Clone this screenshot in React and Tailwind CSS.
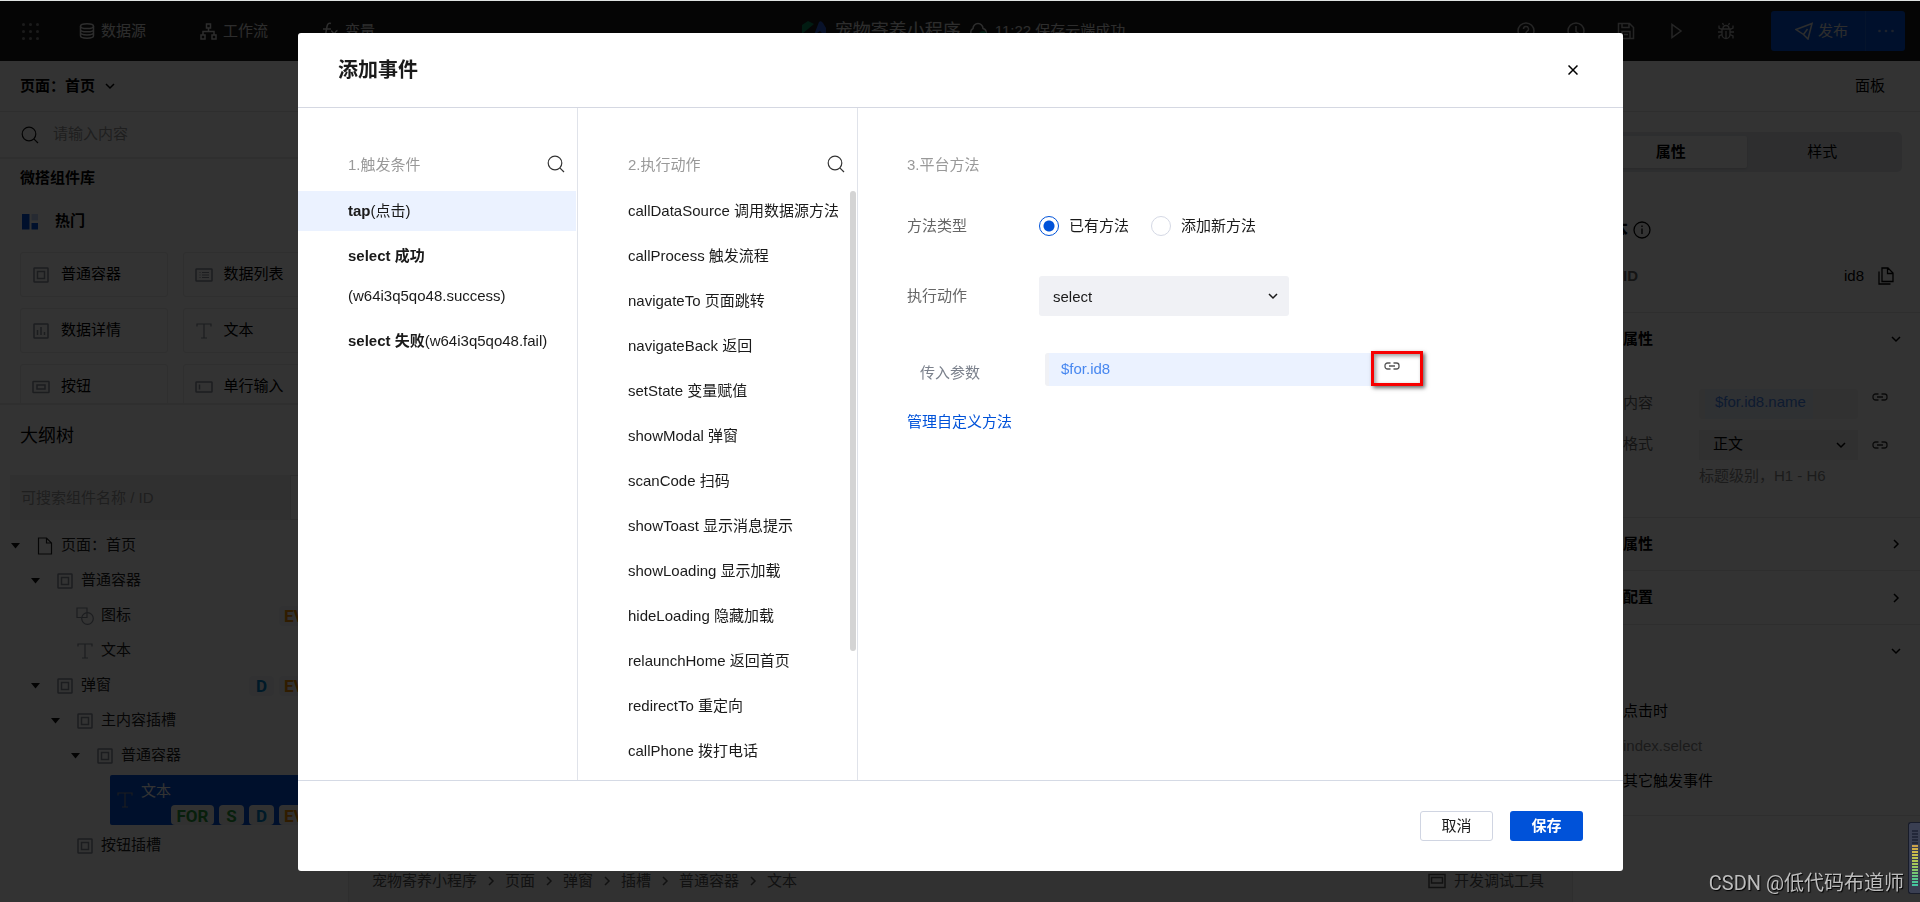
import React from "react";

const FONT = "font-['Liberation_Sans','Noto_Sans_CJK_SC',sans-serif]";

/* ---------- icons ---------- */

function Svg({ w = 18, h = 18, sw = 1.5, className = "", children }) {
  return (
    <svg
      aria-hidden="true"
      width={w}
      height={h}
      viewBox={`0 0 ${w} ${h}`}
      fill="none"
      stroke="currentColor"
      strokeWidth={sw}
      className={`shrink-0 ${className}`}
    >
      {children}
    </svg>
  );
}

const SearchIcon = ({ className }) => (
  <Svg className={className} sw={1.2}>
    <circle cx="8" cy="8" r="6.8" />
    <path d="M12.8 12.8 17 17" />
  </Svg>
);

const ChevronDown = ({ className }) => (
  <Svg w={10} h={10} className={className}>
    <path d="M1 3l4 4 4-4" />
  </Svg>
);

const ChevronRight = ({ className }) => (
  <Svg w={10} h={10} className={className}>
    <path d="M3 1l4 4-4 4" />
  </Svg>
);

const LinkIcon = ({ className }) => (
  <Svg w={16} h={10} sw={1.3} className={className}>
    <path d="M6.500 2H3.500a2.500 2.500 0 0 0-2.500 2.500v1A2.500 2.500 0 0 0 3.500 8h3M9.500 2h3a2.500 2.500 0 0 1 2.500 2.500v1a2.500 2.500 0 0 1-2.500 2.500h-3M5 5h6" />
  </Svg>
);

const ContainerIcon = () => (
  <Svg>
    <rect x="2" y="2" width="14" height="14" rx="0.5" />
    <rect x="5.500" y="5.500" width="7" height="7" />
  </Svg>
);

const ListIcon = () => (
  <Svg>
    <rect x="1" y="3" width="16" height="12" rx="0.5" />
    <path d="M4.500 6.500h1M7 6.500h7M4.500 9h1M7 9h7M4.500 11.500h1M7 11.500h7" strokeWidth="1" />
  </Svg>
);

const DetailIcon = () => (
  <Svg>
    <rect x="2" y="2" width="14" height="14" rx="0.5" />
    <path d="M5.500 8v5M9 5v8M12.500 10v3" />
  </Svg>
);

const TextIcon = () => (
  <Svg sw={1.2}>
    <path d="M2 4.500V2h14v2.500M9 2v14M6 16h6" />
  </Svg>
);

const ButtonIcon = () => (
  <Svg>
    <rect x="1" y="3.500" width="16" height="11" rx="0.5" />
    <rect x="5" y="7" width="8" height="4" />
  </Svg>
);

const InputIcon = () => (
  <Svg>
    <rect x="1" y="4" width="16" height="10" rx="0.5" />
    <path d="M4.500 6.500v5" />
  </Svg>
);

const FileIcon = () => (
  <Svg sw={1.2} className="text-[#222]">
    <path d="M2.500 1h8l5 5v11h-13zM10.500 1v5h5" />
  </Svg>
);

const ShapesIcon = () => (
  <Svg sw={1.2}>
    <path d="M5.500 10.500H1V1h10v4.500" />
    <path d="M5.500 10.500h5.500V5.500" />
    <circle cx="11.500" cy="11.500" r="5.800" />
  </Svg>
);

const TREE_ICONS = {
  file: FileIcon,
  box: ContainerIcon,
  shapes: ShapesIcon,
  text: TextIcon,
};

/* ---------- header ---------- */

function TopBar() {
  return (
    <header className="flex h-[60px] shrink-0 items-center bg-[#1a1a1a] text-[15px] text-[#e0e0e0]">
      <div className="flex flex-1 items-center pl-[22px]">
        <button aria-label="菜单" className="mr-[40px] text-[#888]">
          <svg width="17" height="17" viewBox="0 0 17 17" fill="currentColor" aria-hidden="true">
            {[1.5, 8.5, 15.5].map((y) =>
              [1.5, 8.5, 15.5].map((x) => <circle key={`${x}-${y}`} cx={x} cy={y} r="1.5" />)
            )}
          </svg>
        </button>
        <a href="#data" className="mr-[54px] flex items-center gap-[6px]">
          <Svg w={16} h={16}>
            <ellipse cx="8" cy="3.200" rx="6.500" ry="2.400" />
            <path d="M1.500 3.200v9.600c0 1.300 2.900 2.400 6.500 2.400s6.500-1.100 6.500-2.400V3.200M1.500 6.400c0 1.300 2.900 2.400 6.500 2.400s6.500-1.100 6.500-2.400M1.500 9.600c0 1.300 2.900 2.400 6.500 2.400s6.500-1.100 6.500-2.400" />
          </Svg>
          数据源
        </a>
        <a href="#flow" className="mr-[54px] flex items-center gap-[6px]">
          <Svg w={17} h={17}>
            <path d="M6.500 1h4v4h-4zM1 12h4v4H1zM12 12h4v4h-4zM8.500 5v3.500M3 12V8.500h11V12" />
          </Svg>
          工作流
        </a>
        <a href="#var" className="flex items-center gap-[6px]">
          <Svg w={17} h={18}>
            <path d="M9 1.500c-2.500-1-3.500.5-4 3L3.500 13c-.5 2.500-1 3.500-2.500 3.500M1 7h8M9 9c3 0 3 7 6 7M15.500 8.500c-2.500 0-4 7-6.500 7" />
          </Svg>
          变量
        </a>
      </div>

      <div className="flex items-center">
        <svg width="24" height="20" viewBox="0 0 24 20" aria-hidden="true" className="mr-[9px]">
          <path d="M0 4 6 0l6 3-6 5-6 5z" fill="#078a5b" />
          <path d="M12 14 17 1q2-2 4 1l3 5v9l-6-6z" fill="#2a5bd0" />
        </svg>
        <span className="text-[18px]">宠物寄养小程序</span>
        <Svg w={18} h={18} className="mx-[8px]">
          <path d="M5 14a4 4 0 0 1-1-7.500 5 5 0 0 1 10 0 4 4 0 0 1 1 7.500z" />
          <circle cx="14" cy="13" r="4" fill="#078a5b" stroke="none" />
        </Svg>
        <span>11:22 保存云端成功</span>
      </div>

      <div className="flex flex-1 items-center justify-end pr-[15px]">
        <div className="mr-[36px] flex gap-[32px] text-[#bbb]">
          <button aria-label="帮助">
            <Svg>
              <circle cx="9" cy="9" r="8" />
              <path d="M6.500 7a2.500 2.500 0 1 1 3.500 2.300q-1 .5-1 1.700M9 12.500v1.500" />
            </Svg>
          </button>
          <button aria-label="历史">
            <Svg>
              <circle cx="9" cy="9" r="8" />
              <path d="M9 4v5.500l3 2" />
            </Svg>
          </button>
          <button aria-label="保存页面">
            <Svg>
              <path d="M1.500 1.500h11l4 4v11h-15zM5 1.500v4h7v-4M5 16.500v-7h8v7M7 12.500h4" />
            </Svg>
          </button>
          <button aria-label="预览">
            <Svg>
              <path d="M5 2.500v13l9-6.500z" />
            </Svg>
          </button>
          <button aria-label="调试">
            <Svg sw={1.3}>
              <path d="M5 7h8v5.500a4 4 0 0 1-8 0zM6 6.500a3 3 0 0 1 6 0M9 9v7M1 10h4M13 10h4M2 3.500V6l3 1.500M16 3.500V6l-3 1.500M2 16.500V14l3-1.500M16 16.500V14l-3-1.500M5.500 1l1 2M12.500 1l-1 2" />
            </Svg>
          </button>
        </div>
        <div className="flex h-[40px] rounded-[3px] bg-[#0052d9]">
          <button className="flex w-[94px] items-center justify-end gap-[5px] pr-[17px]">
            <Svg>
              <path d="M1 7.500 17 1.500 13 17 8.500 12.500zM8.500 12.500 12.500 7" />
            </Svg>
            发布
          </button>
          <button
            aria-label="更多"
            className="flex w-[40px] items-center justify-center border-l border-[#1a63dd] text-[#8fa9dd]"
          >
            <svg width="16" height="4" viewBox="0 0 16 4" fill="currentColor" aria-hidden="true">
              <circle cx="1.500" cy="2" r="1.300" />
              <circle cx="8" cy="2" r="1.300" />
              <circle cx="14.500" cy="2" r="1.300" />
            </svg>
          </button>
        </div>
      </div>
    </header>
  );
}

/* ---------- left panel ---------- */

const COMPONENTS = [
  ["普通容器", ContainerIcon],
  ["数据列表", ListIcon],
  ["数据详情", DetailIcon],
  ["文本", TextIcon],
  ["按钮", ButtonIcon],
  ["单行输入", InputIcon],
];

const INDENT = ["pl-[10px]", "pl-[30px]", "pl-[50px]", "pl-[70px]"];

const TREE = [
  { level: 0, open: true, icon: "file", label: "页面：首页", badges: [] },
  { level: 1, open: true, icon: "box", label: "普通容器", badges: [] },
  { level: 2, icon: "shapes", label: "图标", badges: ["EV"] },
  { level: 2, icon: "text", label: "文本", badges: [] },
  { level: 1, open: true, icon: "box", label: "弹窗", badges: ["D", "EV"] },
  { level: 2, open: true, icon: "box", label: "主内容插槽", badges: [] },
  { level: 3, open: true, icon: "box", label: "普通容器", badges: [] },
];

const BADGE_COLORS = {
  FOR: "w-[43px] justify-center text-[#2b9c3c]",
  S: "w-[25px] justify-center text-[#2b9c3c]",
  D: "w-[25px] justify-center text-[#0080c8]",
  EV: "w-[33px] pl-[5px] text-[#f08a00]",
};

function Badges({ items, solid }) {
  return (
    <span className="flex gap-[5px]">
      {items.map((b) => (
        <span
          key={b}
          className={`flex h-[20px] items-center rounded-[4px] pt-[2px] font-['Roboto',sans-serif] text-[17px] leading-none font-bold ${
            solid ? "bg-[#f3f6f4]" : "bg-[#f3f5f8]"
          } ${BADGE_COLORS[b]}`}
        >
          {b}
        </span>
      ))}
    </span>
  );
}

function TreeRow({ level, open, icon, label, badges }) {
  const Icon = TREE_ICONS[icon];
  return (
    <li className={`flex h-[35px] items-center pr-[36px] text-[#222] ${INDENT[level]}`}>
      <span className="flex w-[10px] justify-center">
        {open && (
          <svg width="9" height="6" viewBox="0 0 9 6" fill="#111" aria-hidden="true">
            <path d="M0 0h9L4.500 5.500z" />
          </svg>
        )}
      </span>
      <span className="ml-[16px] text-[#8a8f9c]">
        <Icon />
      </span>
      <span className="ml-[7px] flex-1">{label}</span>
      <Badges items={badges} />
    </li>
  );
}

function LeftPanel() {
  return (
    <aside className="flex w-[349px] shrink-0 flex-col border-r border-[#e5e5e5] bg-white text-[15px] text-black">
      <button className="flex h-[51px] shrink-0 items-center gap-[10px] border-b border-[#e5e5e5] pl-[20px] font-bold">
        页面：首页
        <ChevronDown />
      </button>
      <label className="flex h-[47px] shrink-0 items-center gap-[14px] border-b-2 border-[#ebebeb] pl-[21px]">
        <SearchIcon className="text-[#111]" />
        <input
          aria-label="搜索组件"
          placeholder="请输入内容"
          className="w-[240px] bg-transparent outline-none placeholder:text-[#999]"
        />
      </label>
      <div className="h-[246px] shrink-0 overflow-hidden border-b-2 border-[#e8e8e8]">
        <h2 className="h-[38px] pl-[20px] leading-[38px] font-bold">微搭组件库</h2>
        <h3 className="flex h-[48px] items-center gap-[16px] pl-[22px] font-bold">
          <svg width="17" height="17" viewBox="0 0 17 17" aria-hidden="true">
            <path d="M0 1h7.500v15.500H0z" fill="#0052d9" />
            <path d="M9.500 1H16v6.500H9.500z" fill="#bcd0f7" />
            <path d="M9.500 10H16v6.500H9.500z" fill="#0052d9" />
          </svg>
          热门
        </h3>
        <div className="mt-[7px] grid grid-cols-2 gap-x-[15px] gap-y-[11px] pr-[18px] pl-[20px]">
          {COMPONENTS.map(([name, Icon]) => (
            <button
              key={name}
              className="flex h-[45px] items-center gap-[11px] rounded-[3px] border border-[#e8e8e8] pl-[11px]"
            >
              <span className="text-[#8a8f9c]">
                <Icon />
              </span>
              {name}
            </button>
          ))}
        </div>
      </div>
      <h2 className="mt-[13px] h-[36px] shrink-0 pl-[20px] text-[18px] leading-[36px]">大纲树</h2>
      <div className="mt-[21px] flex h-[45px] shrink-0 pl-[10px]">
        <input
          aria-label="搜索大纲树"
          placeholder="可搜索组件名称 / ID"
          className="w-[280px] bg-[#f0f0f0] pt-[2px] pl-[11px] outline-none placeholder:text-[#999]"
        />
        <button aria-label="展开" className="w-[40px] border border-[#e0e0e0]" />
      </div>
      <ul className="mt-[8px]">
        {TREE.map((row, i) => (
          <TreeRow key={i} {...row} />
        ))}
        <li className="mt-[2px] ml-[110px] flex h-[50px] items-center rounded-l-[2px] bg-[#0052d9] pl-[6px]">
          <span className="text-[#8a8f9c]">
            <TextIcon />
          </span>
          <div className="ml-[7px] flex flex-1 flex-col pr-[36px]">
            <span className="h-[30px] leading-[32px] text-white">文本</span>
            <span className="flex justify-end">
              <Badges items={["FOR", "S", "D", "EV"]} solid />
            </span>
          </div>
        </li>
        <li className="mt-[3px]">
          <ul>
            <TreeRow level={2} icon="box" label="按钮插槽" badges={[]} />
          </ul>
        </li>
      </ul>
    </aside>
  );
}

/* ---------- canvas footer ---------- */

const CRUMBS = ["宠物寄养小程序", "页面", "弹窗", "插槽", "普通容器", "文本"];

function Canvas() {
  return (
    <main className="flex min-w-0 flex-1 flex-col bg-[#f5f5f5]">
      <div className="flex-1" />
      <footer className="flex h-[42px] items-center justify-between pr-[28px] pl-[23px] text-[15px] text-[#555]">
        <nav className="flex items-center">
          {CRUMBS.map((c, i) => (
            <span key={c} className="flex items-center">
              {i > 0 && <ChevronRight className="mx-[9px]" />}
              <a href="#node">{c}</a>
            </span>
          ))}
        </nav>
        <button className="flex items-center gap-[8px]">
          <Svg>
            <rect x="1" y="2.500" width="16" height="13" />
            <rect x="3.500" y="5.500" width="11" height="5.500" />
          </Svg>
          开发调试工具
        </button>
      </footer>
    </main>
  );
}

/* ---------- right panel ---------- */

function Section({ title, open, className = "" }) {
  const Icon = open ? ChevronDown : ChevronRight;
  return (
    <button className={`flex w-full items-center justify-between pr-[19px] pl-[50px] font-bold ${className}`}>
      <span>{title}</span>
      <Icon />
    </button>
  );
}

function RightPanel() {
  return (
    <aside className="w-[348px] shrink-0 border-l border-[#e5e5e5] bg-white text-[15px] text-black">
      <div className="flex h-[51px] items-center justify-end border-b border-[#e5e5e5] pr-[35px]">
        <a href="#panel">面板</a>
      </div>
      <div className="mt-[20px] mr-[18px] ml-[18px] flex h-[40px] rounded-[5px] bg-[#e3e6eb] p-[4px]">
        <button className="flex-1 rounded-[2px] bg-white font-bold shadow">属性</button>
        <button className="flex-1">样式</button>
      </div>
      <div className="mt-[40px] flex h-[36px] items-center gap-[5px] pl-[19px]">
        <h2 className="text-[18px] font-bold">文本</h2>
        <Svg sw={1.3}>
          <circle cx="9" cy="9" r="8" />
          <path d="M9 7.500V13M9 4.500V6" />
        </Svg>
      </div>
      <div className="mt-[10px] flex h-[55px] items-start justify-between border-b border-[#e5e5e5] pt-[7px] pr-[25px] pl-[50px]">
        <span className="font-bold text-[#666]">ID</span>
        <span className="flex items-center gap-[13px]">
          id8
          <button aria-label="复制">
            <Svg sw={1.3}>
              <path d="M5 1h6l5 5v8.500H5zM10.500 1.500v5H16M2 4.500V17h11.500" />
            </Svg>
          </button>
        </span>
      </div>
      <Section title="属性" open className="h-[52px]" />
      <div className="mt-[23px] flex h-[31px] items-center pl-[50px]">
        <label htmlFor="content" className="w-[76px] text-[#666]">内容</label>
        <div className="flex h-[30px] w-[159px] rounded-[3px] bg-[#f3f3f3] pl-[6px]">
          <input
            id="content"
            defaultValue="$for.id8.name"
            className="w-[108px] bg-[#ebf2ff] pb-[2px] pl-[10px] text-[#4787f0] outline-none"
          />
        </div>
        <button aria-label="绑定内容" className="mb-[14px] ml-[14px] text-[#333]"><LinkIcon /></button>
      </div>
      <div className="mt-[10px] flex h-[31px] items-center pl-[50px]">
        <label htmlFor="format" className="w-[76px] text-[#666]">格式</label>
        <div className="relative h-[30px] w-[159px]">
          <select id="format" className="h-[30px] w-full appearance-none bg-[#f0f0f0] pl-[14px] outline-none">
            <option>正文</option>
          </select>
          <ChevronDown className="pointer-events-none absolute top-[10px] right-[12px]" />
        </div>
        <button aria-label="绑定格式" className="ml-[14px] text-[#333]"><LinkIcon /></button>
      </div>
      <p className="mt-[4px] h-[54px] border-b border-[#e5e5e5] pl-[126px] leading-[24px] text-[#888]">标题级别，H1 - H6</p>
      <Section title="属性" className="h-[53px] border-b border-[#e5e5e5]" />
      <Section title="配置" className="h-[54px] border-b border-[#e5e5e5]" />
      <Section title="" open className="h-[52px]" />
      <div className="h-[139px] border-b border-[#e5e5e5] pt-[16px] pl-[50px] leading-[35px]">
        <p>点击时</p>
        <p className="text-[#888]">index.select</p>
        <p>其它触发事件</p>
      </div>
    </aside>
  );
}

/* ---------- dialog ---------- */

const TRIGGERS = [
  { name: "tap", detail: "(点击)", active: true },
  { name: "select 成功", detail: "(w64i3q5qo48.success)" },
  { name: "select 失败", detail: "(w64i3q5qo48.fail)" },
];

const ACTIONS = [
  "callDataSource 调用数据源方法",
  "callProcess 触发流程",
  "navigateTo 页面跳转",
  "navigateBack 返回",
  "setState 变量赋值",
  "showModal 弹窗",
  "scanCode 扫码",
  "showToast 显示消息提示",
  "showLoading 显示加载",
  "hideLoading 隐藏加载",
  "relaunchHome 返回首页",
  "redirectTo 重定向",
  "callPhone 拨打电话",
];

function ColumnHead({ title }) {
  return (
    <div className="mb-[7px] flex h-[40px] items-center justify-between pr-[12px] pl-[50px]">
      <h3 className="pt-[2px] leading-[40px] text-[#999]">{title}</h3>
      <button aria-label={`搜索${title}`} className="text-[#333]">
        <SearchIcon />
      </button>
    </div>
  );
}

function Radio({ label, checked }) {
  return (
    <label className="flex items-center gap-[10px]">
      <input
        type="radio"
        name="method"
        defaultChecked={checked}
        className="h-[20px] w-[20px] appearance-none rounded-full border border-[#d5d9e5] bg-white checked:border-[#0052d9] checked:bg-[radial-gradient(circle,#0052d9_5px,white_6px)]"
      />
      {label}
    </label>
  );
}

function Dialog() {
  return (
    <div className="fixed inset-0 flex bg-black/80 pt-[33px] pr-[297px] pb-[31px] pl-[298px]">
      <section
        role="dialog"
        aria-label="添加事件"
        className="flex min-w-0 flex-1 flex-col overflow-hidden rounded-[3px] bg-white text-[15px] text-[#1a1a1a]"
      >
        <div className="flex h-[75px] shrink-0 items-center justify-between border-b border-[#d5d8e2] pr-[45px] pl-[40px]">
          <h2 className="text-[20px] font-bold">添加事件</h2>
          <button aria-label="关闭" className="text-black">
            <Svg w={10} h={10}>
              <path d="M.5.500l9 9M9.500.500l-9 9" />
            </Svg>
          </button>
        </div>

        <div className="flex min-h-0 flex-1">
          <div className="w-[280px] shrink-0 border-r border-[#e0e3ea] pt-[36px]">
            <ColumnHead title="1.触发条件" />
            <ul className="flex flex-col gap-[5px] pr-px">
              {TRIGGERS.map((t) => (
                <li key={t.name}>
                  <button
                    className={`w-full pr-[20px] pl-[50px] text-left leading-[40px] ${t.active ? "bg-[#ebf2ff]" : ""}`}
                  >
                    <b>{t.name}</b>
                    <wbr />
                    <span className="inline-block">{t.detail}</span>
                  </button>
                </li>
              ))}
            </ul>
          </div>

          <div className="flex w-[280px] shrink-0 flex-col border-r border-[#e0e3ea] pt-[36px]">
            <ColumnHead title="2.执行动作" />
            <div className="relative min-h-0 flex-1 overflow-hidden">
              <ul className="flex flex-col gap-[5px]">
                {ACTIONS.map((a) => (
                  <li key={a}>
                    <button className="w-full pl-[50px] text-left leading-[40px] whitespace-nowrap">{a}</button>
                  </li>
                ))}
              </ul>
              <div className="absolute top-0 right-[1px] h-[460px] w-[6px] rounded-full bg-[#d4d4d4]" />
            </div>
          </div>

          <div className="min-w-0 flex-1 pt-[36px] pl-[49px]">
            <h3 className="h-[40px] leading-[42px] text-[#999]">3.平台方法</h3>
            <fieldset className="mt-[22px] flex h-[40px] items-center">
              <span className="w-[132px] text-[#666]">方法类型</span>
              <div className="flex gap-[22px]">
                <Radio label="已有方法" checked />
                <Radio label="添加新方法" />
              </div>
            </fieldset>
            <div className="mt-[30px] flex h-[40px] items-center">
              <label htmlFor="action" className="w-[132px] text-[#666]">执行动作</label>
              <div className="relative w-[250px]">
                <select
                  id="action"
                  className="h-[40px] w-full appearance-none rounded-[3px] bg-[#f0f1f5] pt-[2px] pl-[14px] text-[#1a1a1a] outline-none"
                >
                  <option>select</option>
                </select>
                <ChevronDown className="pointer-events-none absolute top-[15px] right-[11px]" />
              </div>
            </div>
            <div className="mt-[37px] flex h-[38px] items-start pl-[13px]">
              <label htmlFor="param" className="w-[125px] leading-[40px] text-[#7b818c]">传入参数</label>
              <div className="flex h-[33px] w-[326px] rounded-l-[3px] bg-[#f0f1f5] pl-[4px]">
                <input
                  id="param"
                  defaultValue="$for.id8"
                  className="h-full w-full bg-[#ebf2ff] pb-[2px] pl-[12px] text-[#4787f0] outline-none"
                />
              </div>
              <button
                aria-label="绑定参数"
                className="-mt-[2px] flex h-[35px] w-[52px] items-center border-[3px] border-[#f70000] pb-[5px] pl-[10px] text-[#555] shadow-[2px_2px_4px_rgba(0,0,0,0.6),inset_2px_2px_4px_rgba(0,0,0,0.4)]"
              >
                <LinkIcon />
              </button>
            </div>
            <a href="#methods" className="mt-[19px] inline-block leading-[24px] text-[#0052d9]">管理自定义方法</a>
          </div>
        </div>

        <div className="flex h-[91px] shrink-0 items-center justify-end gap-[17px] border-t border-[#d5dae5] pr-[40px]">
          <button className="h-[30px] w-[73px] rounded-[3px] border border-[#d0d5e2]">取消</button>
          <button className="h-[30px] w-[73px] rounded-[3px] bg-[#0052d9] font-bold text-white">保存</button>
        </div>
      </section>
    </div>
  );
}

/* ---------- floating level meter and signature ---------- */

const METER = [
  "#23283a", "#23283a", "#23283a", "#23283a", "#23283a",
  "#c9a04a", "#cfae48", "#cdb94a", "#c8c04c", "#bcc34f", "#b0c653",
  "#a5c859", "#98c960", "#88c868", "#76c673", "#66c67f", "#58c78c",
  "#4cc797", "#43c6a0",
];

function Corner() {
  return (
    <div className="pointer-events-none fixed right-0 bottom-[4px] flex items-end gap-[4px]">
      <p className="font-['Roboto','Noto_Sans_CJK_SC',sans-serif] text-[20px] leading-[30px] text-[#bdbdbd] [text-shadow:1px_1px_1px_#000]">
        CSDN @低代码布道师
      </p>
      <div className="mb-[4px] flex h-[72px] w-[12px] flex-col justify-center gap-px rounded-l-[3px] border border-r-0 border-[#181c2a] bg-[#3a3f52] pr-[2px] pl-[3px]">
        {METER.map((c, i) => (
          <span key={i} className="h-[2px] w-full" style={{ backgroundColor: c }} />
        ))}
      </div>
    </div>
  );
}

export default function App() {
  return (
    <div className={`flex h-screen flex-col overflow-hidden bg-white pt-px ${FONT}`}>
      <TopBar />
      <div className="flex min-h-0 flex-1">
        <LeftPanel />
        <Canvas />
        <RightPanel />
      </div>
      <Dialog />
      <Corner />
      <div className="fixed inset-x-0 top-0 h-px bg-[#dfe3e2]" />
    </div>
  );
}
